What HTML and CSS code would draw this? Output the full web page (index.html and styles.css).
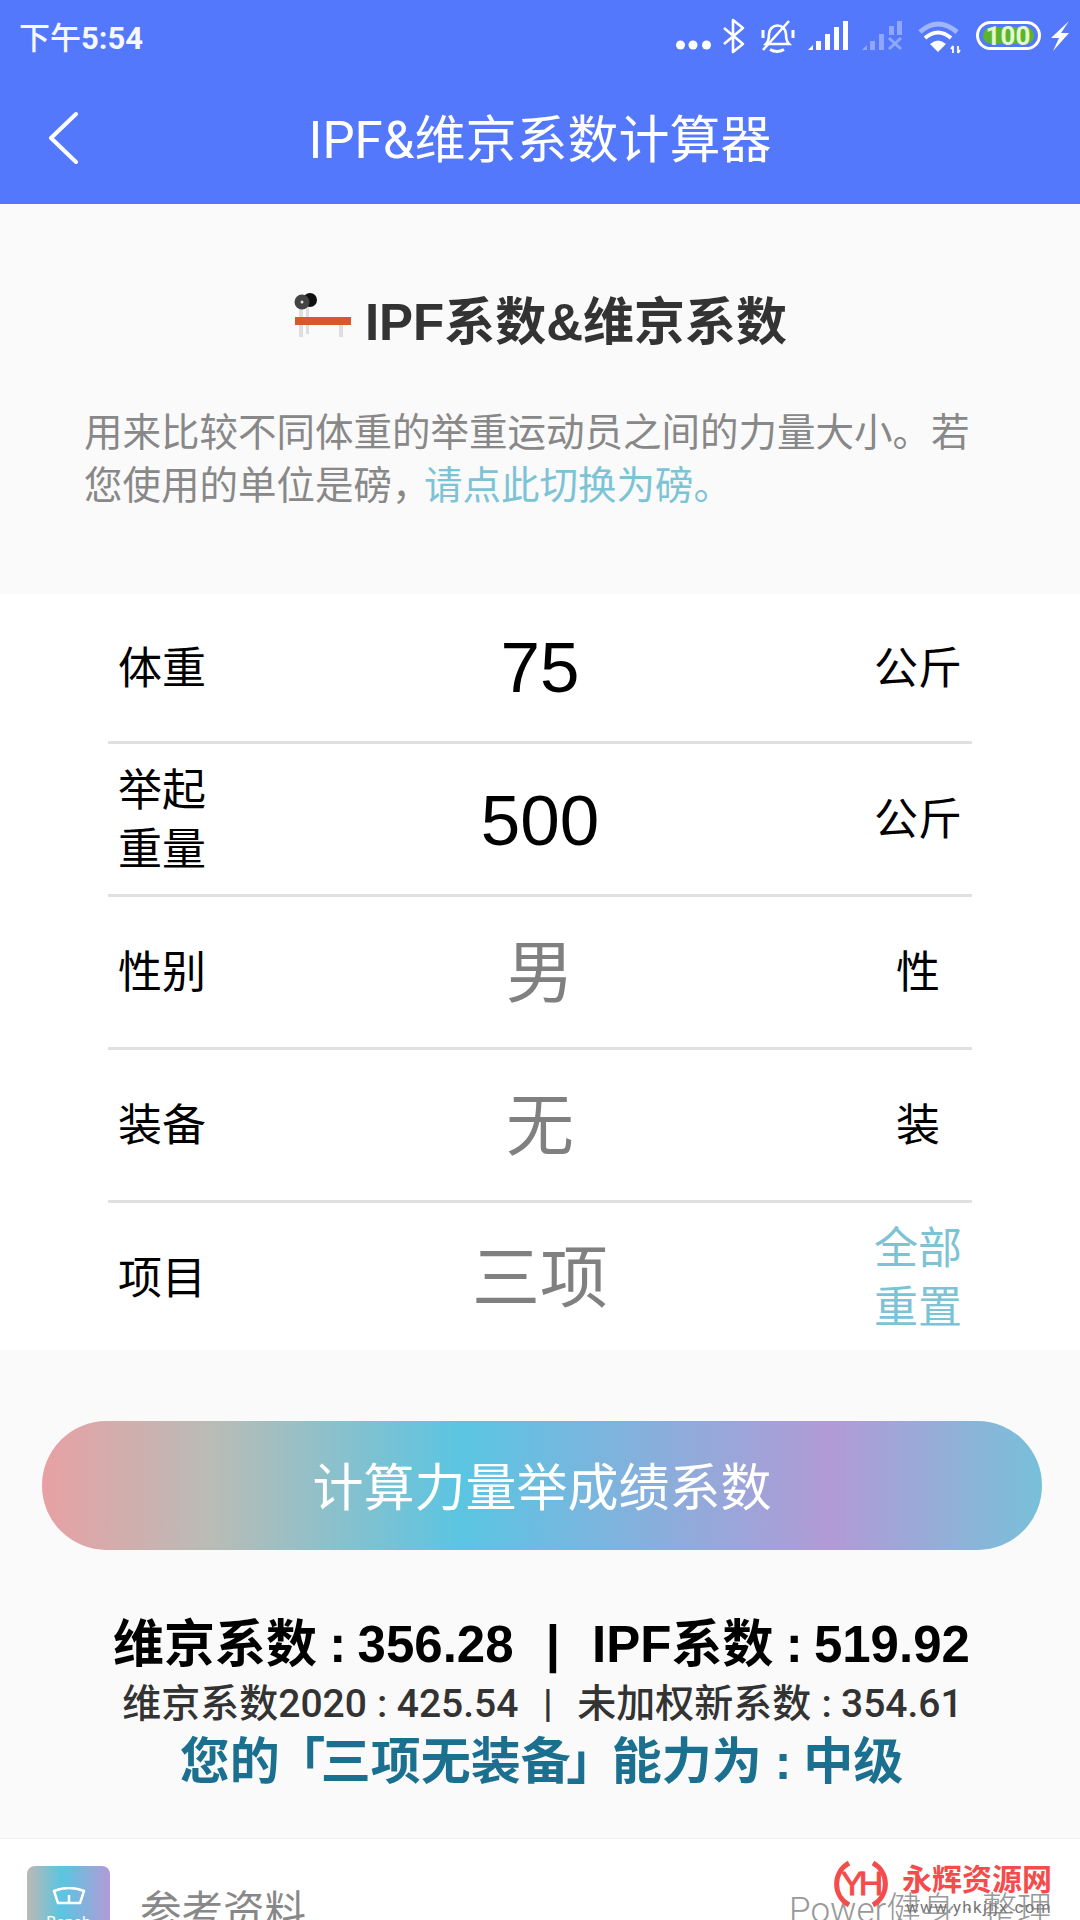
FILE: index.html
```html
<!DOCTYPE html>
<html lang="zh-CN">
<head>
    <meta charset="UTF-8">
    <meta name="viewport" content="width=device-width, initial-scale=1.0">
    <title>IPF&amp;维京系数计算器</title>
    <link rel="stylesheet" href="styles.css">
</head>
<body>
    <header class="app-header">
        <div class="status-bar">
            <span class="status-time">下午<b>5:54</b></span>
            <svg class="status-icons" width="410" height="72" viewBox="670 0 410 72">
                <g fill="#fff">
                    <circle cx="680.500" cy="45" r="4.500"/>
                    <circle cx="693" cy="45" r="4.500"/>
                    <circle cx="706.500" cy="45" r="4.500"/>
                </g>
                <path d="M724 28 L743 44 L733 52 V20 L743 28 L724 44" fill="none" stroke="#fff" stroke-width="2.600" stroke-linejoin="round"/>
                <g fill="none" stroke="#fff" stroke-width="2.600">
                    <path d="M766 44 c3-3 3-6 3-10 a8.500 8.500 0 0 1 17 0 c0 4 0 7 3 10 z"/>
                    <path d="M770 49.500 q7 4 14 0" stroke-width="3"/>
                    <path d="M763 50 L789 21"/>
                    <path d="M763 30 v8 M793 30 v8" stroke-width="3"/>
                </g>
                <g fill="#fff">
                    <path d="M808 50 L813 45 V50 Z"/>
                    <rect x="816" y="41" width="5" height="9"/>
                    <rect x="825" y="34" width="5" height="16"/>
                    <rect x="834" y="27" width="5" height="23"/>
                    <rect x="843" y="21" width="5" height="29"/>
                </g>
                <g fill="#fff" opacity="0.35">
                    <path d="M862 50 L867 45 V50 Z"/>
                    <rect x="870" y="41" width="5" height="9"/>
                    <rect x="879" y="34" width="5" height="16"/>
                    <rect x="889" y="26" width="5" height="9"/>
                    <rect x="897" y="21" width="5" height="14"/>
                    <path d="M889 38 L901 49 M901 38 L889 49" stroke="#fff" stroke-width="3"/>
                </g>
                <g fill="none" stroke="#fff">
                    <path d="M920 32 Q938 16 957 32" stroke-width="5" opacity="0.45"/>
                    <path d="M925 38 Q938 27 951 38" stroke-width="4"/>
                </g>
                <path d="M930 44 Q938 37 946 44 L938 52 Z" fill="#fff"/>
                <path d="M953 46 v7 M953 46 l-2 3 M958 53 v-7 M958 53 l2-3" fill="none" stroke="#fff" stroke-width="1.800"/>
                <rect x="977.500" y="22.500" width="62" height="26" rx="13" fill="none" stroke="#fff" stroke-width="3"/>
                <rect x="983" y="27" width="51" height="17" rx="8.500" fill="#5bb52b"/>
                <text class="battery-text" x="1008" y="45" text-anchor="middle">100</text>
                <path d="M1069 21 L1051 38 H1059 L1053 51 L1069 33 H1061 Z" fill="#fff"/>
            </svg>
        </div>
        <div class="nav-bar">
            <svg class="back-icon" width="30" height="54" viewBox="0 0 30 54">
                <path d="M28 3 L3 27 L28 51" fill="none" stroke="#fff" stroke-width="4" stroke-linecap="round" stroke-linejoin="round"/>
            </svg>
            <h1>IPF&amp;维京系数计算器</h1>
        </div>
    </header>

    <section class="intro">
        <h2 class="intro-title">
            <svg width="60" height="52" viewBox="293 296 60 52">
                <rect x="299" y="310" width="4" height="31" fill="#dedede"/>
                <rect x="306" y="310" width="3" height="28" fill="#dedede"/>
                <rect x="339" y="328" width="4" height="13" fill="#dedede"/>
                <circle cx="310" cy="304" r="7" fill="#111"/>
                <circle cx="302" cy="306" r="7.500" fill="#444"/>
                <circle cx="302" cy="306" r="1.500" fill="#ddd"/>
                <rect x="295" y="321" width="56" height="8" fill="#d9582b"/>
            </svg>
            <span>IPF系数&amp;维京系数</span>
        </h2>
        <p class="intro-text">用来比较不同体重的举重运动员之间的力量大小。若您使用的单位是磅<span class="tight">，</span><a href="#">请点此切换为磅。</a></p>
    </section>

    <section class="form">
        <div class="row">
            <label>体重</label>
            <div class="value digits">75</div>
            <div class="unit">公斤</div>
        </div>
        <div class="row">
            <label>举起<br>重量</label>
            <div class="value digits">500</div>
            <div class="unit">公斤</div>
        </div>
        <div class="row">
            <label>性别</label>
            <div class="value muted">男</div>
            <div class="unit">性</div>
        </div>
        <div class="row">
            <label>装备</label>
            <div class="value muted">无</div>
            <div class="unit">装</div>
        </div>
        <div class="row">
            <label>项目</label>
            <div class="value muted">三项</div>
            <div class="unit reset">全部<br>重置</div>
        </div>
    </section>

    <section class="action">
        <button class="calc-btn">计算力量举成绩系数</button>
        <div class="result-main">维京系数<span class="colon">:</span>356.28<span class="sep">|</span>IPF系数<span class="colon">:</span>519.92</div>
        <div class="result-sub">维京系数2020<span class="colon">:</span>425.54<span class="sep">|</span>未加权新系数<span class="colon">:</span>354.61</div>
        <div class="result-level">您的<span class="bracket">「</span>三项无装备<span class="bracket">」</span>能力为<span class="colon">:</span>中级</div>
    </section>

    <footer class="refs">
        <div class="refs-icon">
            <svg width="34" height="18" viewBox="0 0 34 18">
                <path d="M2 4 Q17 -2 32 4 L28 16 H6 Z M17 8 V16" fill="none" stroke="#fff" stroke-width="2.500" stroke-linejoin="round"/>
            </svg>
            <span class="refs-icon-label">Bench</span>
        </div>
        <span class="refs-title">参考资料</span>
        <span class="refs-credit">Power健身 · 整理</span>
    </footer>

    <div class="watermark">
        <svg width="56" height="50" viewBox="0 0 56 50">
            <path d="M15 3 A24 24 0 0 0 15 45 M39 3 A24 24 0 0 1 39 45" fill="none" stroke="#f44c4c" stroke-width="5"/>
            <text class="mark-letter" x="18" y="35" text-anchor="middle">Y</text>
            <text class="mark-letter" x="37" y="35" text-anchor="middle">H</text>
        </svg>
        <div class="watermark-text">
            <div class="watermark-name">永辉资源网</div>
            <div class="watermark-url">www.yhkjjjx.com</div>
        </div>
    </div>
</body>
</html>
```

FILE: styles.css
```css
* {
    box-sizing: border-box;
}

body {
    position: relative;
    width: 1080px;
    height: 1920px;
    margin: 0;
    overflow: hidden;
    background: #fafafa;
    font-family: Roboto, "Noto Sans CJK SC", sans-serif;
    color: #000;
}

/* Header */
.app-header {
    height: 204px;
    background: #5478fb;
    color: #fff;
}

.status-bar {
    display: flex;
    justify-content: space-between;
    align-items: center;
    height: 72px;
    padding-left: 19px;
}

.status-time {
    padding-bottom: 2px;
    font-size: 31px;
    font-weight: 500;
    opacity: 0.95;
}

.status-time b {
    font-weight: 700;
}

.status-icons {
    display: block;
}

.battery-text {
    font-family: Roboto, sans-serif;
    font-size: 26px;
    font-weight: 700;
    fill: #e4f6d2;
}

.nav-bar {
    position: relative;
    display: flex;
    justify-content: center;
    align-items: center;
    height: 132px;
    padding-bottom: 4px;
}

.nav-bar h1 {
    margin: 0;
    font-size: 51px;
    font-weight: 400;
}

.back-icon {
    position: absolute;
    left: 48px;
    top: 39px;
}

/* Intro */
.intro {
    height: 390px;
    padding: 78px 84px 0;
}

.intro-title {
    display: flex;
    justify-content: center;
    align-items: center;
    gap: 12px;
    height: 72px;
    margin: 0 0 52px;
    font-family: "Liberation Sans", "Noto Sans CJK SC", sans-serif;
    font-size: 51px;
    font-weight: 700;
    color: #333;
}

.intro-text {
    margin: 0;
    font-size: 38.500px;
    line-height: 53px;
    color: #888;
}

.intro-text a {
    color: #7cc3d6;
    text-decoration: none;
}

.tight {
    display: inline-block;
    width: 32px;
    overflow: hidden;
    vertical-align: bottom;
}

/* Form rows */
.form {
    padding: 0 108px;
    background: #fff;
}

.row {
    display: grid;
    grid-template-columns: 108px 1fr 108px;
    align-items: center;
    height: 153px;
    padding-top: 3px;
    border-bottom: 3px solid #e0e0e0;
    font-size: 44px;
    line-height: 59px;
}

.row:first-child {
    height: 150px;
    padding-top: 0;
}

.row:first-child label,
.row:first-child .unit {
    padding-top: 3px;
}

.row:last-child {
    height: 147px;
    padding-top: 5px;
    border-bottom: 0;
}

.row label {
    padding-left: 10px;
    white-space: nowrap;
}

.value {
    font-size: 68px;
    line-height: 80px;
    text-align: center;
}

.value.digits {
    font-family: "Liberation Sans", sans-serif;
    font-size: 71px;
}

.value.muted {
    color: #808080;
}

.unit {
    text-align: center;
}

.unit.reset {
    color: #7cc3d6;
}

/* Button and results */
.action {
    height: 488px;
    padding: 71px 0 0;
    text-align: center;
    white-space: nowrap;
}

.calc-btn {
    display: block;
    width: 1000px;
    height: 129px;
    margin: 0 0 65px 42px;
    padding-bottom: 4px;
    border: 0;
    border-radius: 65px;
    background: linear-gradient(90deg, #e8a0a4 0%, #b9bcb6 17%, #5ac5e2 42%, #b29ad6 79%, #78c0da 100%);
    color: #fff;
    font-family: inherit;
    font-size: 51px;
}

.result-main {
    padding-left: 3px;
    font-family: "Liberation Sans", "Noto Sans CJK SC", sans-serif;
    font-size: 51px;
    line-height: 60px;
    font-weight: 700;
}

.result-main .colon {
    margin: 0 0.22em 0 0.24em;
}

.result-sub {
    margin-top: 1px;
    padding-left: 5px;
    font-size: 39px;
    line-height: 56px;
    font-weight: 500;
    color: #333;
}

.result-level {
    padding-left: 3px;
    font-family: "Liberation Sans", "Noto Sans CJK SC", sans-serif;
    font-size: 50px;
    line-height: 60px;
    font-weight: 700;
    color: #1b6f8f;
}

.colon {
    margin: 0 0.24em 0 0.26em;
}

.sep {
    margin: 0 0.63em;
}

.bracket {
    margin: 0 -4.500px;
}

/* Footer */
.refs {
    display: flex;
    align-items: flex-start;
    height: 82px;
    padding: 27px 28px 0 27px;
    background: #fff;
    border-top: 1px solid #f2f2f2;
    overflow: hidden;
}

.refs-icon {
    display: flex;
    flex-direction: column;
    align-items: center;
    flex-shrink: 0;
    width: 83px;
    height: 83px;
    padding-top: 21px;
    border-radius: 8px;
    background: linear-gradient(90deg, #bdb8b4 0%, #5ac5e2 42%, #b29ad6 100%);
}

.refs-icon-label {
    margin-top: 8px;
    font-size: 16px;
    color: #fff;
}

.refs-title {
    margin: 12px 0 0 30px;
    font-size: 41.500px;
    color: #888;
}

.refs-credit {
    margin: 15px 0 0 auto;
    font-size: 35px;
    font-weight: 300;
    color: #999;
    white-space: nowrap;
}

/* Site watermark stamped over the corner */
.watermark {
    position: absolute;
    right: 28px;
    top: 1860px;
    display: flex;
    gap: 12px;
}

.mark-letter {
    font-family: "Liberation Sans", sans-serif;
    font-size: 34px;
    fill: #f44c4c;
    stroke: #f44c4c;
    stroke-width: 1px;
}

.watermark-text {
    width: 150px;
}

.watermark-name {
    margin-top: 2px;
    font-size: 30px;
    line-height: 36px;
    font-weight: 700;
    color: #f44c4c;
    white-space: nowrap;
}

.watermark-url {
    margin-left: 4px;
    font-size: 17px;
    line-height: 18px;
    letter-spacing: 1.300px;
    color: #777;
    white-space: nowrap;
}
```
